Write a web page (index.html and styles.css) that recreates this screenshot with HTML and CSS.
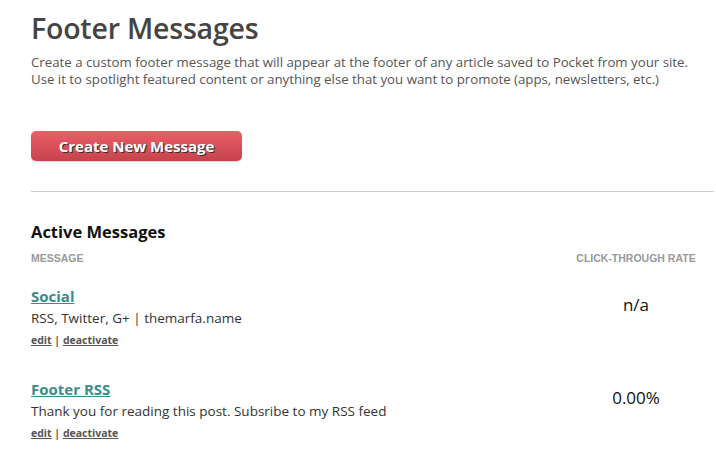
FILE: index.html
```html
<!DOCTYPE html>
<html>
<head>
<meta charset="utf-8">
<link rel="stylesheet" href="styles.css">
</head>
<body>
<div class="page">
  <h1 class="title">Footer Messages</h1>
  <p class="intro">Create a custom footer message that will appear at the footer of any article saved to Pocket from your site.<br>Use it to spotlight featured content or anything else that you want to promote (apps, newsletters, etc.)</p>
  <div class="actions"><a class="btn" href="#">Create New Message</a></div>
  <hr class="divider">
  <h2 class="section-title">Active Messages</h2>
  <div class="table">
    <div class="thead">
      <div class="th">MESSAGE</div>
      <div class="th th-rate">CLICK-THROUGH RATE</div>
    </div>
    <div class="row">
      <div class="msg">
        <a class="msg-title" href="#">Social</a>
        <div class="msg-text">RSS, Twitter, G+ | themarfa.name</div>
        <div class="msg-links"><a href="#">edit</a> | <a href="#">deactivate</a></div>
      </div>
      <div class="rate">n/a</div>
    </div>
    <div class="row">
      <div class="msg">
        <a class="msg-title" href="#">Footer RSS</a>
        <div class="msg-text">Thank you for reading this post. Subsribe to my RSS feed</div>
        <div class="msg-links"><a href="#">edit</a> | <a href="#">deactivate</a></div>
      </div>
      <div class="rate">0.00%</div>
    </div>
  </div>
</div>
</body>
</html>
```
FILE: styles.css
```css
html, body { margin: 0; padding: 0; background: #fff; }
body { font-family: "Open Sans", "Liberation Sans", sans-serif; color: #444; }
.page { padding: 9px 2px 0 31px; }
.title { margin: 0; font-size: 28.5px; font-weight: 600; color: #444; line-height: 38px; letter-spacing: -0.2px; }
.intro { margin: 7px 0 0; font-size: 13.25px; line-height: 17px; color: #555; }
.actions { margin-top: 43px; }
.btn { display: inline-block; width: 211px; height: 30px; line-height: 30px; text-align: center; border-radius: 5px; background: linear-gradient(#ea5f68, #c7434c); color: #fff; font-weight: 700; font-size: 15px; text-decoration: none; text-shadow: 1px 1px 0 #333; box-shadow: 0 1px 1px rgba(0,0,0,0.15); }
.divider { margin: 30px 0 0 0; border: 0; border-top: 1px solid #ccc; }
.section-title { margin: 30px 0 0; font-size: 16.5px; font-weight: 700; color: #111; line-height: 20px; }
.table { width: 665px; }
.thead { display: flex; justify-content: space-between; margin-top: 10px; }
.th { font-family: "Liberation Sans", sans-serif; font-size: 10.5px; font-weight: 700; color: #999; }
.th-rate { width: 120px; text-align: center; }
.row { display: flex; justify-content: space-between; align-items: flex-start; margin-top: 21px; }
.row + .row { margin-top: 31px; }
.msg-title { font-size: 15px; font-weight: 700; color: #3b8c8c; line-height: 18px; }
.msg-text { font-size: 13.5px; color: #333; margin-top: 3px; line-height: 17px; }
.msg-links { font-size: 10.5px; font-weight: 700; color: #555; margin-top: 6px; }
.msg-links a { color: #555; }
.rate { width: 120px; text-align: center; font-size: 17px; color: #111; margin-top: 8px; }
```
